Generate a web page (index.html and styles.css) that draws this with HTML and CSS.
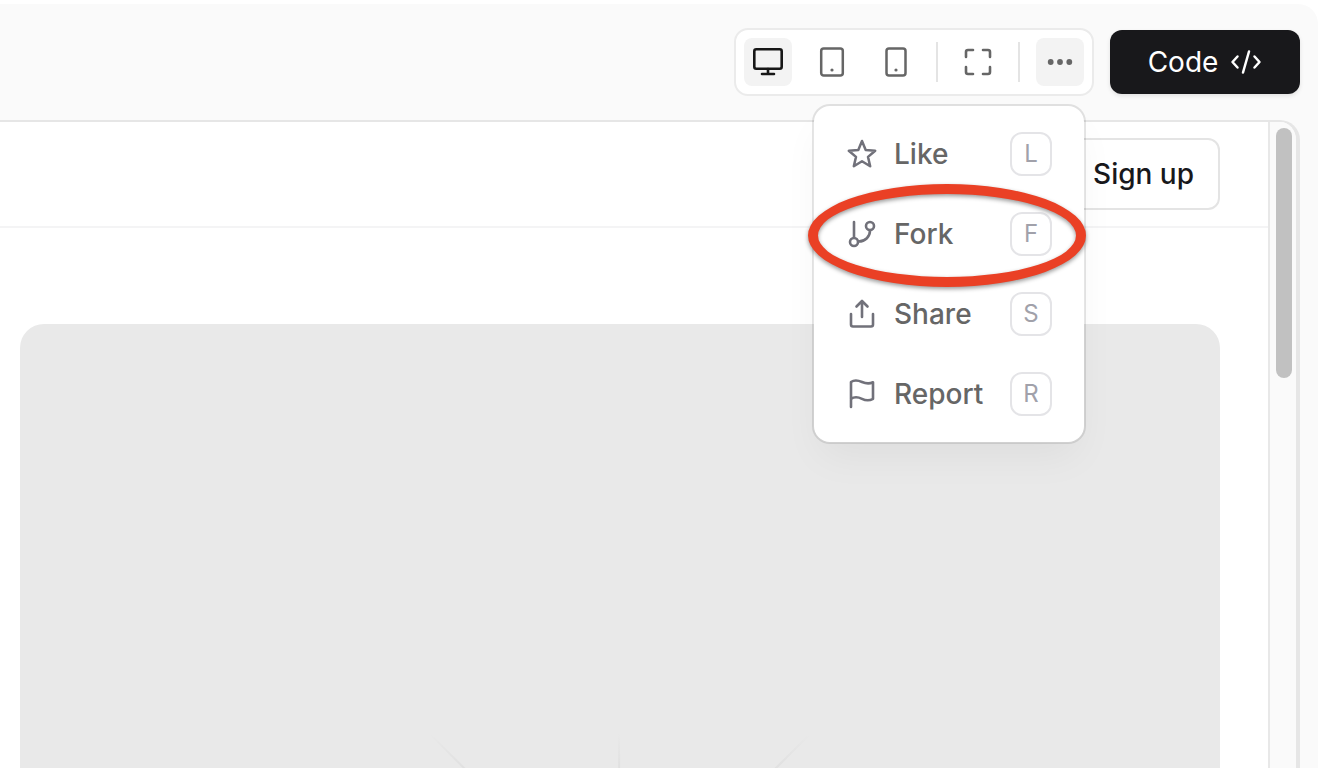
FILE: index.html
```html
<!DOCTYPE html>
<html lang="en">
<head>
    <meta charset="UTF-8">
    <meta name="viewport" content="width=device-width, initial-scale=1.0">
    <title>Block Preview</title>
    <link rel="stylesheet" href="styles.css">
</head>
<body>
    <div class="panel">
        <header class="toolbar">
            <div class="tools">
                <button type="button" class="tool active" aria-label="Desktop">
                    <svg width="32" height="32" viewBox="0 0 32 32" stroke-width="2.6">
                        <rect x="2.3" y="3.3" width="27.4" height="19.4" rx="2"/>
                        <path d="M16 23v5M10 28h12"/>
                    </svg>
                </button>
                <button type="button" class="tool" aria-label="Tablet">
                    <svg width="32" height="32" viewBox="0 0 32 32" stroke-width="2.5">
                        <rect x="5.2" y="2.5" width="21.6" height="27" rx="2.5"/>
                        <circle class="dot" cx="16" cy="24" r="1.6"/>
                    </svg>
                </button>
                <button type="button" class="tool" aria-label="Mobile">
                    <svg width="32" height="32" viewBox="0 0 32 32" stroke-width="2.5">
                        <rect x="6.5" y="2.5" width="19" height="27" rx="2.5"/>
                        <circle class="dot" cx="16" cy="24" r="1.6"/>
                    </svg>
                </button>
                <span class="separator"></span>
                <button type="button" class="tool" aria-label="Fullscreen">
                    <svg width="32" height="32" viewBox="0 0 32 32" stroke-width="2.6">
                        <path d="M4 11V6a2 2 0 0 1 2-2h5M21 4h5a2 2 0 0 1 2 2v5M28 21v5a2 2 0 0 1-2 2h-5M11 28H6a2 2 0 0 1-2-2v-5"/>
                    </svg>
                </button>
                <span class="separator"></span>
                <div class="more">
                    <button type="button" class="tool open" aria-label="More" aria-haspopup="menu" aria-expanded="true">
                        <svg width="32" height="32" viewBox="0 0 32 32">
                            <circle class="dot" cx="6.7" cy="16" r="2.9"/>
                            <circle class="dot" cx="16" cy="16" r="2.9"/>
                            <circle class="dot" cx="25.3" cy="16" r="2.9"/>
                        </svg>
                    </button>
                    <div class="menu" role="menu">
                        <button type="button" class="menu-item" role="menuitem">
                            <svg width="32" height="32" viewBox="0 0 32 32" stroke-width="2.5">
                                <path d="M16 3l3.7 8.900 9.500.8-7.200 6.200 2.200 9.300-8.200-5-8.200 5 2.200-9.300-7.200-6.200 9.500-.8z"/>
                            </svg>
                            <span>Like</span>
                            <kbd>L</kbd>
                        </button>
                        <button type="button" class="menu-item marked" role="menuitem">
                            <svg width="32" height="32" viewBox="0 0 32 32" stroke-width="2.6">
                                <path d="M8 4v15M24 12.500c0 6-4.500 11-11.500 11"/>
                                <circle cx="24" cy="8" r="4"/>
                                <circle cx="8" cy="24" r="4"/>
                            </svg>
                            <span>Fork</span>
                            <kbd>F</kbd>
                        </button>
                        <button type="button" class="menu-item" role="menuitem">
                            <svg width="32" height="32" viewBox="0 0 32 32" stroke-width="2.6">
                                <path d="M16 19V3M10.500 8.500L16 3l5.500 5.500M5 16v10.500a2 2 0 0 0 2 2h18a2 2 0 0 0 2-2V16"/>
                            </svg>
                            <span>Share</span>
                            <kbd>S</kbd>
                        </button>
                        <button type="button" class="menu-item" role="menuitem">
                            <svg width="32" height="32" viewBox="0 0 32 32" stroke-width="2.6">
                                <path d="M5 29V4c3-2 7.500-1.500 11 0s8 1.700 11 .3v16.500c-3 1.700-7.500 1.700-11 0s-8-2-11 0"/>
                            </svg>
                            <span>Report</span>
                            <kbd>R</kbd>
                        </button>
                    </div>
                </div>
            </div>
            <button type="button" class="code-btn">
                Code
                <svg width="32" height="32" viewBox="0 0 32 32" stroke-width="2.5">
                    <path d="M7.500 10.500L2.500 16l5 5.500M24.500 10.500l5 5.500-5 5.500M19 5.500l-6 21"/>
                </svg>
            </button>
        </header>

        <div class="frame">
            <div class="page">
                <nav class="navbar">
                    <a href="#" class="sign-up">Sign up</a>
                </nav>
                <main class="content">
                    <div class="hero">
                        <svg class="rays" width="400" height="400" viewBox="0 0 400 400">
                            <defs>
                                <linearGradient id="fade" gradientUnits="userSpaceOnUse" x1="0" y1="10" x2="0" y2="60">
                                    <stop offset="0" stop-color="#dcdcdc" stop-opacity="0"/>
                                    <stop offset="1" stop-color="#dcdcdc"/>
                                </linearGradient>
                            </defs>
                            <path stroke="url(#fade)" stroke-width="2" d="M10 10l190 190M199 10l1 190M390 10L200 200"/>
                        </svg>
                    </div>
                </main>
            </div>
            <div class="scrollbar"><div class="thumb"></div></div>
        </div>
    </div>
</body>
</html>
```
FILE: styles.css
```css
* {
    margin: 0;
    padding: 0;
    box-sizing: border-box;
}

body {
    font-family: Inter, 'Liberation Sans', sans-serif;
    font-size: 28px;
    line-height: 32px;
    height: 100vh;
    padding-top: 4px;
    background: #fff;
    color: #18181b;
    overflow: hidden;
}

button {
    font: inherit;
    color: inherit;
    background: none;
    border: none;
    cursor: pointer;
}

svg {
    display: block;
    flex-shrink: 0;
    fill: none;
    stroke: currentColor;
    stroke-linecap: round;
    stroke-linejoin: round;
}

.dot {
    fill: currentColor;
    stroke: none;
}

.panel {
    display: flex;
    flex-direction: column;
    height: 100%;
    padding-right: 18px;
    background: #fafafa;
    border-top-right-radius: 20px;
}

/* Toolbar */
.toolbar {
    display: flex;
    justify-content: flex-end;
    align-items: center;
    gap: 16px;
    padding: 24px 0;
}

.tools {
    display: flex;
    align-items: center;
    gap: 16px;
    padding: 8px;
    background: #fff;
    border: 2px solid #ebebeb;
    border-radius: 14px;
}

.tool {
    display: flex;
    align-items: center;
    justify-content: center;
    width: 48px;
    height: 48px;
    border-radius: 8px;
    color: #666;
}

.tool.active,
.tool.open {
    background: #f3f3f3;
}

.tool.active {
    color: #171717;
}

.separator {
    width: 2px;
    height: 40px;
    background: #e4e4e4;
}

.code-btn {
    display: flex;
    align-items: center;
    justify-content: center;
    gap: 12px;
    width: 190px;
    height: 64px;
    background: #18181b;
    color: #fff;
    border-radius: 12px;
    box-shadow: 0 2px 4px rgba(0, 0, 0, 0.1);
}

/* Dropdown */
.more {
    position: relative;
}

.menu {
    position: absolute;
    top: 66px;
    right: -2px;
    z-index: 10;
    width: 274px;
    padding: 8px;
    background: #fff;
    background-clip: padding-box;
    border: 2px solid rgba(0, 0, 0, 0.1);
    border-radius: 18px;
    box-shadow: 0 20px 40px -8px rgba(0, 0, 0, 0.05);
}

.menu-item {
    position: relative;
    display: flex;
    align-items: center;
    gap: 16px;
    width: 100%;
    height: 80px;
    padding: 0 24px;
    color: #666;
    font-weight: 500;
}

.menu-item svg {
    color: #71717a;
}

.menu-item kbd {
    display: flex;
    align-items: center;
    justify-content: center;
    width: 42px;
    height: 44px;
    margin-left: auto;
    border: 2px solid #e4e4e7;
    border-radius: 12px;
    color: #a1a1aa;
    font-family: inherit;
    font-size: 24px;
    font-weight: 400;
}

/* Ring around the highlighted entry */
.marked::after {
    content: '';
    position: absolute;
    inset: -10px -10px -13px -14px;
    border: 10px solid #ea4025;
    border-radius: 50%;
    filter: drop-shadow(0 2px 2px rgba(0, 0, 0, 0.4));
    pointer-events: none;
}

/* Preview */
.frame {
    display: flex;
    flex: 1;
    min-height: 0;
    border: 2px solid #e6e6e6;
    border-width: 2px 4px 0 0;
    border-top-right-radius: 20px;
    overflow: hidden;
}

.page {
    flex: 1;
    background: #fff;
}

.navbar {
    display: flex;
    justify-content: flex-end;
    padding: 16px 48px 16px 20px;
    border-bottom: 2px solid #f4f4f5;
}

.sign-up {
    padding: 18px 24px;
    border: 2px solid #e4e4e4;
    border-radius: 12px;
    color: #18181b;
    font-weight: 500;
    text-decoration: none;
}

.content {
    padding: 96px 48px 0 20px;
}

.hero {
    display: flex;
    justify-content: center;
    height: 800px;
    padding-top: 400px;
    background: #e9e9e9;
    border-radius: 24px;
}

.scrollbar {
    width: 28px;
    padding: 6px 4px 6px 6px;
    background: #fafafa;
    border-left: 2px solid #e8e8e8;
}

.thumb {
    width: 16px;
    height: 250px;
    background: #c1c1c1;
    border-radius: 8px;
}
```
